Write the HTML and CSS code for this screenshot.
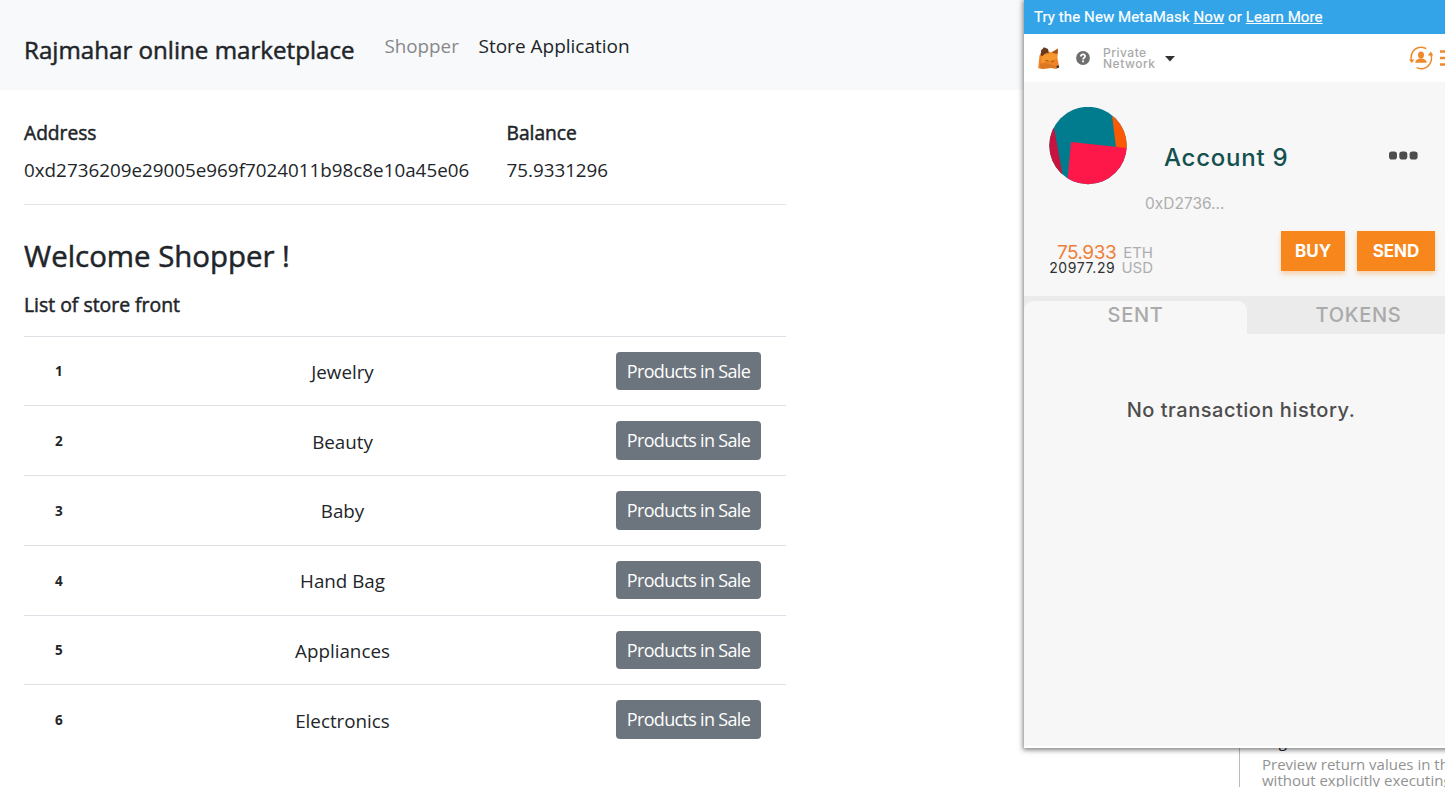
FILE: index.html
```html
<!DOCTYPE html>
<html lang="en">
<head>
<meta charset="utf-8">
<title>Rajmahar online marketplace</title>
<link rel="stylesheet" href="styles.css">
</head>
<body>
<div class="page">
  <header class="navbar">
    <span class="brand">Rajmahar online marketplace</span>
    <nav class="links"><a class="link muted">Shopper</a><a class="link link-app">Store Application</a></nav>
  </header>
  <main class="content">
    <section class="account">
      <div class="field field-address"><h5 class="label">Address</h5><span class="value">0xd2736209e29005e969f7024011b98c8e10a45e06</span></div>
      <div class="field"><h5 class="label">Balance</h5><span class="value">75.9331296</span></div>
    </section>
    <h2 class="welcome">Welcome Shopper !</h2>
    <h5 class="list-title">List of store front</h5>
    <div class="stores">
      <div class="row"><b class="num">1</b><span class="name">Jewelry</span><button class="btn">Products in Sale</button></div>
      <div class="row"><b class="num">2</b><span class="name">Beauty</span><button class="btn">Products in Sale</button></div>
      <div class="row"><b class="num">3</b><span class="name">Baby</span><button class="btn">Products in Sale</button></div>
      <div class="row"><b class="num">4</b><span class="name">Hand Bag</span><button class="btn">Products in Sale</button></div>
      <div class="row"><b class="num">5</b><span class="name">Appliances</span><button class="btn">Products in Sale</button></div>
      <div class="row"><b class="num">6</b><span class="name">Electronics</span><button class="btn">Products in Sale</button></div>
    </div>
  </main>

  <aside class="hint">
    <div class="hint-title">Eager evaluation</div>
    <div class="hint-text">Preview return values in the<br>without explicitly executing</div>
  </aside>

  <section class="wallet">
    <div class="banner">Try the New MetaMask <u>Now</u> or <u>Learn More</u></div>
    <div class="topbar">
      <svg class="fox" width="22" height="24" viewBox="1 0 22 24">
        <path fill="#ee8426" d="M2.500 9.500 5 5l6.500.500 2.500 1 7-3.500-.6 9 1.600 8-2.500 3-5-1.200-9.300 1-4-.500z"/>
        <path fill="#683a1d" d="M3.800 9.500 4 4.500 7 1.200 11 3 11.800 6.500 8.500 7.500 6 10z"/>
        <path fill="#a3531c" d="m14.500 6.500 6.500-4-.6 5.500z"/>
        <path fill="#f6982f" d="m4 12 3-3.500 5-.5 3.500-1 4.500 2-.500 4-6 1.500-9 2.500z"/>
        <path fill="#dc7722" d="m3 18 5-1 8 2 4 2.500-2 1-4-.5-8.500 1-2.200-.800z"/>
        <path d="m8.500 14.500 3 .5M14.500 15.500l2.500-.5" stroke="#a04d18" stroke-width="1"/>
        <circle cx="20.800" cy="20.800" r="1.400" fill="#34343c"/>
      </svg>
      <svg class="help" width="14" height="14" viewBox="0 0 14 14">
        <circle cx="7" cy="7" r="6.900" fill="#6f6f6f"/>
        <path d="M4.900 5.500C5 2.700 9.200 2.800 9.100 5.200 9 6.800 7.100 6.700 7.100 8.600M7.100 9.600v1.700" fill="none" stroke="#fff" stroke-width="1.800"/>
      </svg>
      <span class="network">Private<br>Network</span>
      <svg class="caret" width="10" height="6" viewBox="0 0 10 6"><path d="M0 0h10L5 5.500z" fill="#333"/></svg>
      <svg class="switch" width="24" height="24" viewBox="0 0 24 24">
        <g fill="none" stroke="#ee8a2c" stroke-width="1.500"><path d="M2.500 15C.5 7 6 1 12.500 1.200c2 .1 3.500.7 4.800 1.500M21.800 8c2.500 7-2 14-8.300 14.700-2.300.2-4.500-.2-6-1.200"/></g>
        <path fill="#ee8a2c" d="M0 13.500h5.500L2.800 17zM18.800 9.500 21.800 5.500 24.300 9.500z"/>
        <ellipse cx="12" cy="9" rx="3" ry="3.600" fill="#ee8a2c"/>
        <path fill="#ee8a2c" d="M6.300 16.700c0-3.200 2.500-3.400 4.500-4.300h2.400c2 .9 4.500 1.100 4.500 4.300z"/>
      </svg>
      <svg class="burger" width="20" height="16" viewBox="0 0 20 16"><path d="M0 1.500h20M0 8h20M0 14.500h20" stroke="#ee8a2c" stroke-width="2.600"/></svg>
    </div>
    <div class="profile">
      <svg class="avatar" width="78" height="78" viewBox="0 0 78 78">
        <clipPath id="disc"><circle cx="39" cy="38.500" r="38.700"/></clipPath>
        <g clip-path="url(#disc)">
          <path fill="#017c8e" d="M0 0h78v78H0z"/>
          <path fill="#c7143f" d="M0 20 5 21 14 70H0z"/>
          <path fill="#fb5a05" d="M62 0h16v45l-11-4.500z"/>
          <path fill="#fd1849" d="M22 35 78 41v37H18z"/>
        </g>
      </svg>
      <div class="identity"><span class="account-name">Account 9</span><span class="account-id">0xD2736...</span></div>
      <svg class="dots" width="30" height="9" viewBox="0 0 30 9"><g fill="#4d4d4d"><rect x="0" y="0.500" width="8" height="8" rx="2.800"/><rect x="10.300" y="0.500" width="8" height="8" rx="2.800"/><rect x="20.600" y="0.500" width="8" height="8" rx="2.800"/></g></svg>
    </div>
    <div class="funds">
      <div class="amounts">
        <div class="eth"><span class="eth-value">75.933</span><span class="unit unit-eth">ETH</span></div>
        <div class="usd"><span class="usd-value">20977.29</span><span class="unit">USD</span></div>
      </div>
      <button class="action buy">BUY</button><button class="action send">SEND</button>
    </div>
    <div class="tabs"><div class="tab active">SENT</div><div class="tab">TOKENS</div></div>
    <div class="empty">No transaction history.</div>
  </section>
</div>
</body>
</html>
```
FILE: styles.css
```css
* { box-sizing: border-box; }
body { margin: 0; background: #fff; color: #212529; font-family: "Open Sans", "Noto Sans", sans-serif; font-size: 18.800px; }
h2, h5 { margin: 0; font-weight: 400; }
.brand, .label, .welcome, .list-title { -webkit-text-stroke: .5px currentColor; }
.page { position: relative; width: 1445px; height: 787px; overflow: hidden; white-space: nowrap; }
.navbar { display: flex; height: 90px; background: #f8f9fa; padding: 0 24px; }
.brand { width: 360.500px; font-size: 24.150px; line-height: 100px; }
.links { display: flex; gap: 20px; line-height: 92px; }
.link { width: 74px; }
.link-app { width: 151px; font-size: 19px; }
.muted { color: #86888b; }
.content { width: 786px; padding-left: 24px; }
.account { display: flex; height: 115px; padding-top: 28px; border-bottom: 1px solid #e5e5e5; }
.field { display: flex; flex-direction: column; }
.field-address { width: 482.500px; }
.label { font-size: 19.200px; line-height: 30px; }
.value { line-height: 44px; }
.field-address .value { letter-spacing: .020px; }
.welcome { padding-top: 31px; font-size: 29.400px; line-height: 40px; }
.list-title { font-size: 19.400px; line-height: 30px; padding-top: 14px; height: 59.600px; }
.row { display: grid; grid-template-columns: 135px 367px 1fr; align-items: center; height: 69.750px; border-top: 1px solid #dcdfe3; }
.num { padding: 1px 0 0 31px; font-size: 13.500px; }
.name { padding-top: 2px; text-align: center; }
.btn { width: 145px; height: 38.500px; margin-left: 90px; padding: 0; border: 0; border-radius: 4px; background: #6c757d; color: #fff; font: 18px/39px "Open Sans", sans-serif; letter-spacing: -.680px; }
.hint { position: absolute; left: 1239px; top: 732px; width: 206px; height: 55px; padding-left: 22px; border-left: 1px solid #bbb; color: #929292; font-size: 15px; line-height: 16px; }
.hint-title { padding-bottom: 4px; color: #222; line-height: 19px; height: 24px; }
.wallet { position: absolute; left: 1024px; top: 0; width: 450px; height: 748px; background: #f7f7f7; border-bottom: 2px solid #fff; box-shadow: 0 1px 5px 1px rgba(0,0,0,.5); font-family: Inter, sans-serif; }
.banner { height: 34px; padding-left: 10px; background: #33a4e7; color: #fff; font: 400 15px/34px Roboto, sans-serif; -webkit-text-stroke: .2px #fff; letter-spacing: .100px; }
.topbar { display: flex; align-items: center; height: 48px; padding-left: 14px; background: #fff; }
.help { margin-left: 16px; }
.network { width: 53px; margin-left: 13px; color: #a9a9a9; font-size: 12px; font-weight: 500; line-height: 11px; letter-spacing: .500px; }
.caret { margin: 2px 0 0 9px; }
.switch { margin-left: 234px; }
.burger { margin-left: 7px; }
.profile { display: flex; height: 149px; padding: 25px 0 0 25px; }
.identity { display: flex; flex-direction: column; width: 169px; padding-left: 18px; }
.account-name { padding: 36px 0 0 19px; color: #13504e; font-size: 24px; font-weight: 500; line-height: 30px; letter-spacing: .750px; }
.account-id { padding-top: 21px; color: #aeaeae; font-size: 15.500px; line-height: 20px; }
.dots { margin: 44px 0 0 93px; }
.funds { display: flex; height: 65px; padding-left: 25px; }
.amounts { width: 104px; padding-top: 12px; }
.eth, .usd { display: flex; justify-content: flex-end; }
.eth { height: 16px; gap: 7px; line-height: 20px; }
.usd { height: 15px; gap: 6px; line-height: 18px; }
.eth-value { color: #ee7f3a; font-size: 19px; letter-spacing: -.500px; }
.usd-value { color: #303030; font-size: 14px; letter-spacing: .600px; }
.unit { color: #aeaeae; font-size: 15px; }
.action { height: 40px; padding: 0; border: 0; background: #f7861c; color: #fff; font: 700 17px/40px Inter, sans-serif; box-shadow: 0 3px 5px rgba(247,134,28,.35); }
.buy { width: 64px; margin-left: 128px; }
.send { width: 78px; margin-left: 12px; }
.tabs { display: flex; height: 38px; padding-top: 5px; background: #ebebeb; }
.tab { width: 223px; height: 33px; color: #aaa; font-size: 20px; font-weight: 500; line-height: 29px; letter-spacing: .700px; text-align: center; }
.active { border-radius: 9px 9px 0 0; background: #f7f7f7; }
.empty { width: 434px; padding-top: 61px; color: #4d4d4d; font-size: 20px; font-weight: 500; line-height: 30px; letter-spacing: .520px; text-align: center; }
```
